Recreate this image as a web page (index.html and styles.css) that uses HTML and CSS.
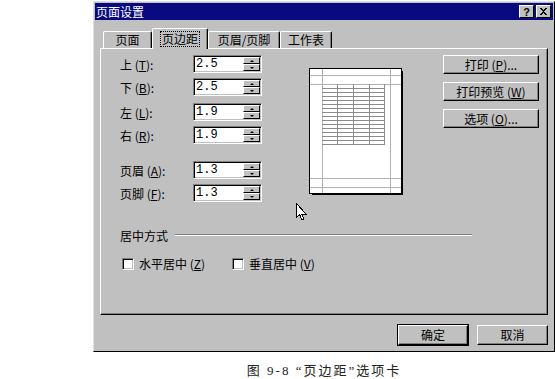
FILE: index.html
```html
<!DOCTYPE html>
<html lang="zh-CN">

<head>
    <meta charset="UTF-8">
    <title>页面设置</title>
    <link rel="stylesheet" href="styles.css">
</head>

<body>
    <div class="dialog">
        <!-- Заголовок окна -->
        <div class="titlebar">
            <span class="title">页面设置</span>
            <div class="title-buttons">
                <span class="tbtn">?</span>
                <span class="tbtn">
                    <svg width="9" height="8" viewBox="0 0 9 8" shape-rendering="crispEdges">
                        <path d="M1 0h2v1h1v1h1v-1h1v-1h2v1h-1v1h-1v1h-1v1h1v1h1v1h1v1h-2v-1h-1v-1h-1v1h-1v1h-2v-1h1v-1h1v-1h1v-1h-1v-1h-1v-1h-1z" fill="#000"/>
                    </svg>
                </span>
            </div>
        </div>

        <!-- Вкладки -->
        <div class="tabs">
            <div class="tab tab-page">页面</div>
            <div class="tab tab-margins active"><span class="focus">页边距</span></div>
            <div class="tab tab-header">页眉/页脚</div>
            <div class="tab tab-sheet">工作表</div>
        </div>

        <div class="panel">
            <div class="top">
                <div class="fields">
                    <div class="field">
                        <label>上 (<u>T</u>):</label>
                        <div class="spin"><span class="val">2.5</span><span class="arrows"><i class="up"></i><i class="down"></i></span></div>
                    </div>
                    <div class="field">
                        <label>下 (<u>B</u>):</label>
                        <div class="spin"><span class="val">2.5</span><span class="arrows"><i class="up"></i><i class="down"></i></span></div>
                    </div>
                    <div class="field group">
                        <label>左 (<u>L</u>):</label>
                        <div class="spin"><span class="val">1.9</span><span class="arrows"><i class="up"></i><i class="down"></i></span></div>
                    </div>
                    <div class="field">
                        <label>右 (<u>R</u>):</label>
                        <div class="spin"><span class="val">1.9</span><span class="arrows"><i class="up"></i><i class="down"></i></span></div>
                    </div>
                    <div class="field group-wide">
                        <label>页眉 (<u>A</u>):</label>
                        <div class="spin"><span class="val">1.3</span><span class="arrows"><i class="up"></i><i class="down"></i></span></div>
                    </div>
                    <div class="field">
                        <label>页脚 (<u>F</u>):</label>
                        <div class="spin"><span class="val">1.3</span><span class="arrows"><i class="up"></i><i class="down"></i></span></div>
                    </div>
                </div>

                <!-- Миниатюра страницы -->
                <div class="preview">
                    <svg width="91" height="124" viewBox="0 0 91 124" shape-rendering="crispEdges">
                        <g stroke="#b0b0b0" stroke-width="1">
                            <line x1="12.5" y1="0" x2="12.5" y2="124"/>
                            <line x1="80.5" y1="0" x2="80.5" y2="124"/>
                            <line x1="0" y1="6.5" x2="91" y2="6.5"/>
                            <line x1="0" y1="15.5" x2="91" y2="15.5"/>
                            <line x1="0" y1="109.5" x2="91" y2="109.5"/>
                            <line x1="0" y1="118.5" x2="91" y2="118.5"/>
                        </g>
                        <g stroke="#8c8c8c" stroke-width="1">
                            <line x1="27.5" y1="15" x2="27.5" y2="75"/>
                            <line x1="43.5" y1="15" x2="43.5" y2="75"/>
                            <line x1="59.5" y1="15" x2="59.5" y2="75"/>
                            <line x1="74.5" y1="15" x2="74.5" y2="75"/>
                            <line x1="12" y1="19.5" x2="75" y2="19.5"/>
                            <line x1="12" y1="23.5" x2="75" y2="23.5"/>
                            <line x1="12" y1="27.5" x2="75" y2="27.5"/>
                            <line x1="12" y1="31.5" x2="75" y2="31.5"/>
                            <line x1="12" y1="35.5" x2="75" y2="35.5"/>
                            <line x1="12" y1="39.5" x2="75" y2="39.5"/>
                            <line x1="12" y1="43.5" x2="75" y2="43.5"/>
                            <line x1="12" y1="47.5" x2="75" y2="47.5"/>
                            <line x1="12" y1="51.5" x2="75" y2="51.5"/>
                            <line x1="12" y1="55.5" x2="75" y2="55.5"/>
                            <line x1="12" y1="59.5" x2="75" y2="59.5"/>
                            <line x1="12" y1="63.5" x2="75" y2="63.5"/>
                            <line x1="12" y1="67.5" x2="75" y2="67.5"/>
                            <line x1="12" y1="71.5" x2="75" y2="71.5"/>
                            <line x1="12" y1="75.5" x2="75" y2="75.5"/>
                        </g>
                    </svg>
                </div>

                <div class="side-buttons">
                    <div class="btn"><span>打印 (<u>P</u>)...</span></div>
                    <div class="btn"><span>打印预览 (<u>W</u>)</span></div>
                    <div class="btn"><span>选项 (<u>O</u>)...</span></div>
                </div>
            </div>

            <div class="center">
                <div class="legend"><span>居中方式</span><span class="rule"></span></div>
                <div class="checks">
                    <div class="check"><span class="box"></span><span>水平居中 (<u>Z</u>)</span></div>
                    <div class="check"><span class="box"></span><span>垂直居中 (<u>V</u>)</span></div>
                </div>
            </div>
        </div>

        <div class="footer">
            <div class="btn btn-default">确定</div>
            <div class="btn btn-footer">取消</div>
        </div>

        <!-- Курсор мыши -->
        <svg class="cursor" width="11" height="18" viewBox="0 0 11 18" shape-rendering="crispEdges">
            <path d="M0.5 0.5v14l3-3 2.5 5.5 2-1-2.5-5h4.5z" fill="#fff" stroke="#000" stroke-width="1"/>
        </svg>
    </div>

    <div class="caption">图 9-8 “页边距”选项卡</div>
</body>

</html>
```

FILE: styles.css
```css
/* Общие стили */
body {
    margin: 0;
    background: #fff;
    font-family: "Noto Sans CJK SC", sans-serif;
    font-size: 12px;
    color: #000;
}

u {
    text-decoration: underline;
    text-underline-offset: 1px;
}

.dialog {
    position: relative;
    margin: 1px 0 0 93px;
    width: 462px;
    box-sizing: border-box;
    padding: 1px;
    background: #c0c0c0;
    border: 1px solid;
    border-color: #dfdfdf #000 #000 #dfdfdf;
}

/* Заголовок */
.titlebar {
    height: 17px;
    display: flex;
    align-items: center;
    justify-content: space-between;
    background: #0a0a80;
    color: #fff;
    padding: 0 2px 0 1px;
}

.title {
    font-size: 12px;
    line-height: 17px;
}

.title-buttons {
    display: flex;
    gap: 2px;
}

.tbtn {
    width: 15px;
    height: 13px;
    box-sizing: border-box;
    display: flex;
    align-items: center;
    justify-content: center;
    background: #c0c0c0;
    color: #000;
    font-family: "Liberation Sans", sans-serif;
    font-weight: bold;
    font-size: 11px;
    border: 1px solid;
    border-color: #fff #000 #000 #fff;
}

/* Вкладки */
.tabs {
    height: 28px;
    display: flex;
    align-items: flex-end;
    padding-left: 8px;
}

.tab {
    height: 17px;
    box-sizing: border-box;
    display: flex;
    align-items: center;
    justify-content: center;
    border: 1px solid;
    border-bottom: none;
    border-color: #fff #000 #000 #fff;
    border-radius: 2px 2px 0 0;
    box-shadow: inset -1px 0 0 #808080;
    line-height: 14px;
}

.tab-page {
    width: 49px;
}

.tab-margins {
    width: 56px;
}

.tab-header {
    width: 72px;
}

.tab-sheet {
    width: 52px;
}

.tab.active {
    position: relative;
    z-index: 1;
    height: 21px;
    margin-bottom: -1px;
    background: #c0c0c0;
}

.focus {
    padding: 0 1px;
    outline: 1px dotted #000;
    outline-offset: 0;
}

/* Панель вкладки */
.panel {
    margin-left: 5px;
    width: 448px;
    height: 267px;
    box-sizing: border-box;
    border: 1px solid;
    border-color: #fff #000 #000 #fff;
    box-shadow: inset -1px -1px 0 #808080;
    padding: 6px 0 0 19px;
}

.top {
    display: flex;
    align-items: flex-start;
    height: 148px;
}

.fields {
    display: flex;
    flex-direction: column;
    gap: 5px;
}

.field {
    display: flex;
    align-items: center;
    height: 18px;
}

.field.group {
    margin-top: 2px;
}

.field.group-wide {
    margin-top: 12px;
}

.field label {
    width: 73px;
}

.spin {
    width: 69px;
    height: 18px;
    box-sizing: border-box;
    display: flex;
    align-items: stretch;
    background: #fff;
    border: 1px solid;
    border-color: #808080 #fff #fff #808080;
    box-shadow: inset 1px 1px 0 #000, inset -1px -1px 0 #c0c0c0;
}

.val {
    flex: 1;
    padding: 1px 0 0 2px;
    font-family: "Liberation Mono", monospace;
    font-size: 12px;
    line-height: 15px;
}

.arrows {
    width: 17px;
    display: flex;
    flex-direction: column;
    padding: 1px 1px 1px 0;
}

.arrows i {
    flex: 1;
    position: relative;
    background: #c0c0c0;
    border: 1px solid;
    border-color: #fff #000 #000 #fff;
}

.arrows i::after {
    content: "";
    position: absolute;
    left: 50%;
    top: 50%;
    margin: -1px 0 0 -2px;
    border-left: 2px solid transparent;
    border-right: 2px solid transparent;
}

.arrows .up::after {
    border-bottom: 2px solid #000;
}

.arrows .down::after {
    border-top: 2px solid #000;
}

/* Миниатюра */
.preview {
    margin: 14px 0 0 48px;
    width: 91px;
    height: 124px;
    background: #fff;
    outline: 1px solid #000;
    box-shadow: 2px 2px 0 #000;
}

.preview svg {
    display: block;
}

/* Кнопки */
.btn {
    box-sizing: border-box;
    display: flex;
    align-items: center;
    justify-content: center;
    background: #c0c0c0;
    border: 1px solid;
    border-color: #fff #000 #000 #fff;
    box-shadow: inset -1px -1px 0 #808080;
    line-height: 14px;
}

.side-buttons {
    margin-left: 42px;
    display: flex;
    flex-direction: column;
    gap: 8px;
}

.side-buttons .btn {
    width: 96px;
    height: 19px;
}

/* Центрирование */
.center {
    margin-top: 25px;
}

.legend {
    display: flex;
    align-items: center;
    gap: 7px;
    height: 14px;
}

.rule {
    width: 297px;
    height: 1px;
    background: #808080;
    border-bottom: 1px solid #fff;
}

.checks {
    display: flex;
    gap: 27px;
    margin-top: 15px;
    padding-left: 2px;
}

.check {
    display: flex;
    align-items: center;
    gap: 5px;
    height: 13px;
}

.box {
    width: 12px;
    height: 12px;
    box-sizing: border-box;
    background: #fff;
    border: 1px solid;
    border-color: #808080 #fff #fff #808080;
    box-shadow: inset 1px 1px 0 #000, inset -1px -1px 0 #c0c0c0;
}

/* Нижние кнопки */
.footer {
    display: flex;
    justify-content: flex-end;
    gap: 9px;
    margin-top: 10px;
    padding: 0 5px 5px 0;
}

.footer .btn {
    height: 20px;
}

.btn-default {
    width: 70px;
    outline: 1px solid #000;
    outline-offset: 0;
}

.btn-footer {
    width: 71px;
}

.cursor {
    position: absolute;
    left: 202px;
    top: 201px;
}

/* Подпись к рисунку */
.caption {
    margin: 8px 0 0 93px;
    width: 462px;
    text-align: center;
    font-family: "Liberation Serif", "Noto Sans CJK SC", serif;
    font-size: 13px;
    color: #222;
    letter-spacing: 2px;
}
```
